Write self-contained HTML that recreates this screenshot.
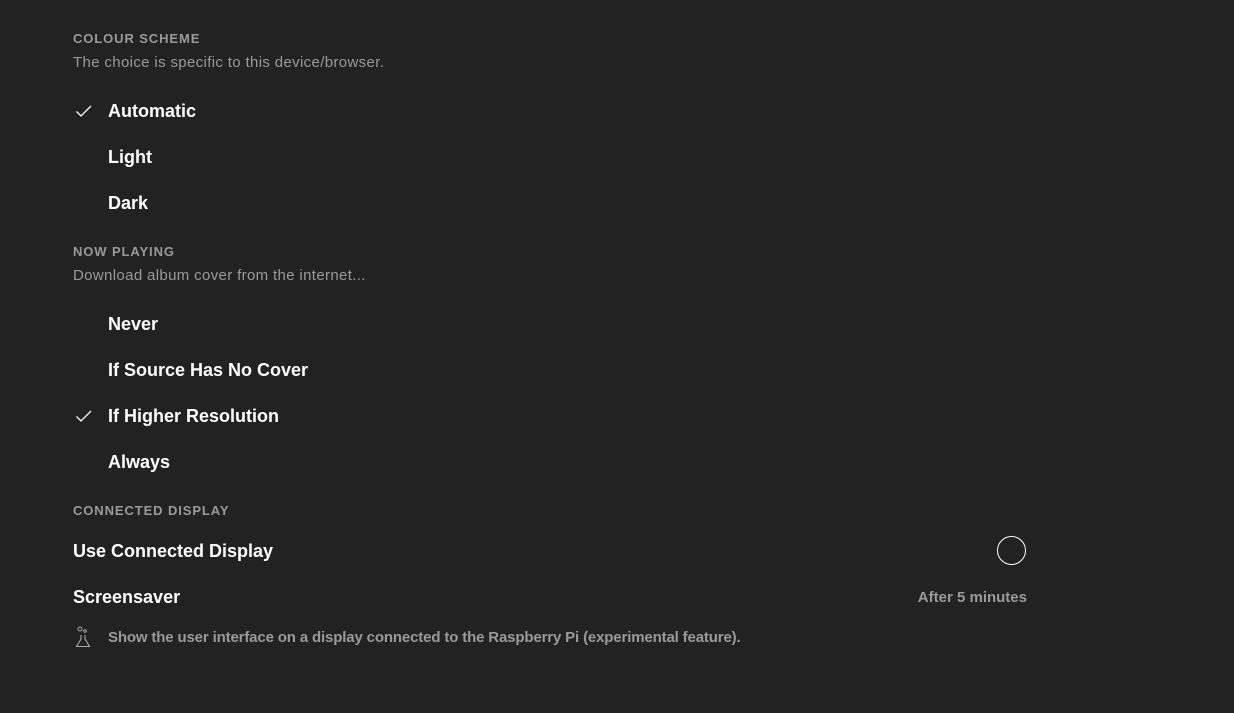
<!DOCTYPE html>
<html><head><style>
html,body{margin:0;padding:0;}
body{width:1234px;height:713px;background:#222222;position:relative;overflow:hidden;font-family:"Liberation Sans",sans-serif;}
.a{position:absolute;white-space:nowrap;line-height:20px;}
.h{font-size:13px;font-weight:bold;color:#9a9a9a;letter-spacing:0.9px;left:73px;}
.s{font-size:15px;color:#9a9a9a;left:73px;letter-spacing:0.35px;}
.i{font-size:18px;font-weight:bold;color:#fff;left:108px;}
.t{font-size:18px;font-weight:bold;color:#fff;left:73px;}
.c{position:absolute;left:75px;}
</style></head><body>
<div class="a h" style="top:29px">COLOUR SCHEME</div>
<div class="a s" style="top:53px">The choice is specific to this device/browser.</div>
<svg class="c" style="top:103px" width="18" height="16" viewBox="0 0 18 16"><path d="M1.5 8.5 L6 13 L16 3" fill="none" stroke="#fff" stroke-width="1.3"/></svg>
<div class="a i" style="top:101px">Automatic</div>
<div class="a i" style="top:147px">Light</div>
<div class="a i" style="top:193px">Dark</div>
<div class="a h" style="top:242px">NOW PLAYING</div>
<div class="a s" style="top:266px">Download album cover from the internet...</div>
<div class="a i" style="top:314px">Never</div>
<div class="a i" style="top:360px">If Source Has No Cover</div>
<svg class="c" style="top:408px" width="18" height="16" viewBox="0 0 18 16"><path d="M1.5 8.5 L6 13 L16 3" fill="none" stroke="#fff" stroke-width="1.3"/></svg>
<div class="a i" style="top:406px">If Higher Resolution</div>
<div class="a i" style="top:452px">Always</div>
<div class="a h" style="top:501px">CONNECTED DISPLAY</div>
<div class="a t" style="top:541px">Use Connected Display</div>
<div style="position:absolute;left:997px;top:536px;width:27px;height:27px;border:1.5px solid #fff;border-radius:50%"></div>
<div class="a t" style="top:587px">Screensaver</div>
<div class="a" style="top:588px;right:207px;font-size:15px;font-weight:bold;color:#9a9a9a">After 5 minutes</div>
<svg style="position:absolute;left:74px;top:626px" width="20" height="22" viewBox="0 0 20 22"><circle cx="6" cy="3" r="2" fill="none" stroke="#aaa" stroke-width="1"/><circle cx="11" cy="5" r="1.3" fill="none" stroke="#aaa" stroke-width="1"/><path d="M7 9 V13 L2.5 20.5 H15.5 L11 13 V9" fill="none" stroke="#aaa" stroke-width="1.1"/></svg>
<div class="a" style="top:628px;left:108px;font-size:15px;font-weight:bold;color:#9a9a9a;letter-spacing:-0.15px">Show the user interface on a display connected to the Raspberry Pi (experimental feature).</div>
</body></html>
